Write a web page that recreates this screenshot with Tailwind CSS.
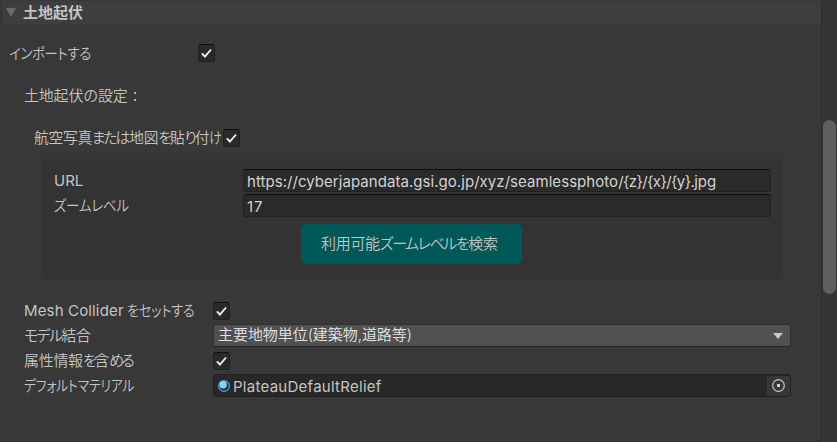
<!DOCTYPE html>
<html lang="ja">
<head>
<meta charset="utf-8">
<title>土地起伏</title>
<script src="https://cdn.jsdelivr.net/npm/@tailwindcss/browser@4"></script>
</head>
<body class="h-[442px] w-[837px] overflow-hidden bg-[#383838] font-[Inter,'Noto_Sans_CJK_JP',sans-serif] text-[15px] leading-[22px] text-[#c4c4c4]">
<svg class="hidden">
  <symbol id="check" viewBox="0 0 17 18"><path d="M3.9 9.4 6.9 12.5 13 5.5" fill="none" stroke="#eeeeee" stroke-width="1.9"/></symbol>
</svg>
<div class="flex h-full font-[350]">
  <main class="flex h-full w-[821px] flex-col border-b border-[#303030] whitespace-nowrap">
    <header class="mt-px ml-[3px] flex h-[23px] items-center bg-[#3e3e3e] pl-[3px]">
      <svg class="h-[9px] w-[10px]" viewBox="0 0 10 9"><path d="M0 0H10L5 9Z" fill="#6b6b6b"/></svg>
      <h2 class="ml-[7px] text-[15px] font-bold">土地起伏</h2>
    </header>
    <div class="mt-[18px] flex h-[22px] items-center pl-[9px]">
      <span class="w-[189px] pt-px"><span class="inline-block origin-left scale-x-[0.89] tracking-[-0.3px] [font-feature-settings:'palt']">インポートする</span></span>
      <span class="h-[18px] w-[17px] rounded-[3px] border border-[#202020] border-t-[#0d0d0d] bg-[#2a2a2a]"><svg class="-mt-px -ml-px h-[18px] w-[17px]"><use href="#check"/></svg></span>
    </div>
    <div class="mt-5 flex h-[22px] items-center pl-6 tracking-[-0.2px]"><span class="w-[105px] pt-px">土地起伏の設定</span><span class="flex flex-col gap-[5px] pt-[3px] pl-[5px]"><i class="size-0.5 bg-[#b8b8b8]"></i><i class="size-0.5 bg-[#b8b8b8]"></i></span></div>
    <div class="mt-[21px] flex h-[22px] items-center pl-[34px]">
      <span class="w-[189px]"><span class="inline-block origin-left scale-x-[0.985] tracking-[-0.3px] [font-feature-settings:'palt']">航空写真<span class="tracking-[-2.1px]">または</span><span class="ml-px">地図</span><span class="tracking-[-1.8px]">を</span>貼<span class="tracking-[-2px]">り</span>付<span class="inline-block origin-left scale-x-[0.85]">け</span></span></span>
      <span class="h-[18px] w-[17px] rounded-[3px] border border-[#202020] border-t-[#0d0d0d] bg-[#2a2a2a]"><svg class="-mt-px -ml-px h-[18px] w-[17px]"><use href="#check"/></svg></span>
    </div>
    <section class="mt-[10px] ml-[43px] flex h-[120px] w-[738px] flex-col bg-[#333333] pt-[10px] pr-[10px] pl-[11px]">
      <div class="flex h-[25px]">
        <label class="w-[189px] pt-px font-normal">URL</label>
        <div class="h-[23px] flex-1 rounded-[3px] border border-[#212121] border-t-[#0d0d0d] bg-[#2a2a2a] pl-[3px] leading-[24px] font-normal text-[#d2d2d2]"><span class="tracking-[0.05px]">https://cyberjapandata.gsi.go.jp/xyz/seamlessphoto<span class="tracking-[-0.6px]">/{z}/{x}/{y}.</span>jpg</span></div>
      </div>
      <div class="flex h-[25px]">
        <label class="w-[189px] pt-px"><span class="inline-block origin-left scale-x-[0.9] tracking-[-0.3px] [font-feature-settings:'palt']">ズームレベル</span></label>
        <div class="h-[23px] flex-1 rounded-[3px] border border-[#212121] border-t-[#0d0d0d] bg-[#2a2a2a] pl-[3px] leading-[24px] font-normal tracking-[1px] text-[#d2d2d2]">17</div>
      </div>
      <button class="mt-[5px] ml-[247px] h-10 w-[221px] rounded-[5px] bg-[#005858] pl-5 text-left tracking-[-0.3px] [font-feature-settings:'palt']">利用可能<span class="tracking-[-1.45px]">ズームレベルを</span>検索</button>
    </section>
    <div class="mt-[19px] flex flex-col pl-6">
      <div class="flex h-[25px] items-center">
        <span class="w-[189px]"><span class="font-normal tracking-[0.15px]">Mesh Collider</span><span class="ml-[3px] inline-block origin-left scale-x-[0.88] tracking-[-0.3px] [font-feature-settings:'palt']">をセットする</span></span>
        <span class="h-[18px] w-[17px] rounded-[3px] border border-[#202020] border-t-[#0d0d0d] bg-[#2a2a2a]"><svg class="-mt-px -ml-px h-[18px] w-[17px]"><use href="#check"/></svg></span>
      </div>
      <div class="flex h-[25px] items-center">
        <span class="w-[189px] tracking-[-0.3px] [font-feature-settings:'palt']"><span class="tracking-[-1.7px]">モデル</span>結合</span>
        <div class="flex h-[23px] w-[578px] items-center justify-between rounded-[3px] border border-[#303030] border-b-[#242424] bg-[#515151] pr-[7px] pl-1 text-[#e4e4e4]"><span class="-mt-0.5 tracking-[-0.05px]">主要地物単位(建築物,道路等)</span><svg class="h-[6px] w-[10px]" viewBox="0 0 10 6"><path d="M0 0H10L5 6Z" fill="#c8c8c8"/></svg></div>
      </div>
      <div class="flex h-[25px] items-center">
        <span class="w-[189px] tracking-[-0.3px] [font-feature-settings:'palt']">属性情報<span class="tracking-[-2.3px]">を</span>含<span class="tracking-[-2.5px]">める</span></span>
        <span class="h-[18px] w-[17px] rounded-[3px] border border-[#202020] border-t-[#0d0d0d] bg-[#2a2a2a]"><svg class="-mt-px -ml-px h-[18px] w-[17px]"><use href="#check"/></svg></span>
      </div>
      <div class="flex h-[25px] items-center">
        <span class="w-[189px]"><span class="inline-block origin-left scale-x-[0.86] tracking-[-0.3px] [font-feature-settings:'palt']">デフォルトマテリアル</span></span>
        <div class="flex h-[23px] w-[578px] items-center overflow-hidden rounded-[4px] border border-[#202020] bg-[#282828] pl-1">
          <svg class="size-3" viewBox="0 0 12 12"><circle cx="6" cy="6" r="5.4" fill="#263840" stroke="#5ba6c3" stroke-width="1.1"/><circle cx="5.1" cy="4.8" r="3.7" fill="#81d5fa"/></svg>
          <span class="ml-[3px] flex-1 pt-0.5 font-normal tracking-[0.27px]">PlateauDefaultRelief</span>
          <span class="flex h-[20px] w-[23px] items-center justify-center bg-[#373737] pr-px"><svg class="size-[13px]" viewBox="0 0 13 13"><circle cx="6.5" cy="6.5" r="5.8" fill="none" stroke="#c4c4c4" stroke-width="1.2"/><path d="M5 5h3v3H5z" fill="#d2d2d2"/></svg></span>
        </div>
      </div>
    </div>
  </main>
  <aside class="h-full w-4 border-l border-[#2f2f2f] bg-[#353535] pt-[120px] pl-px"><div class="h-[174px] w-[13px] rounded-full bg-[#5f5f5f]"></div></aside>
</div>
</body>
</html>
